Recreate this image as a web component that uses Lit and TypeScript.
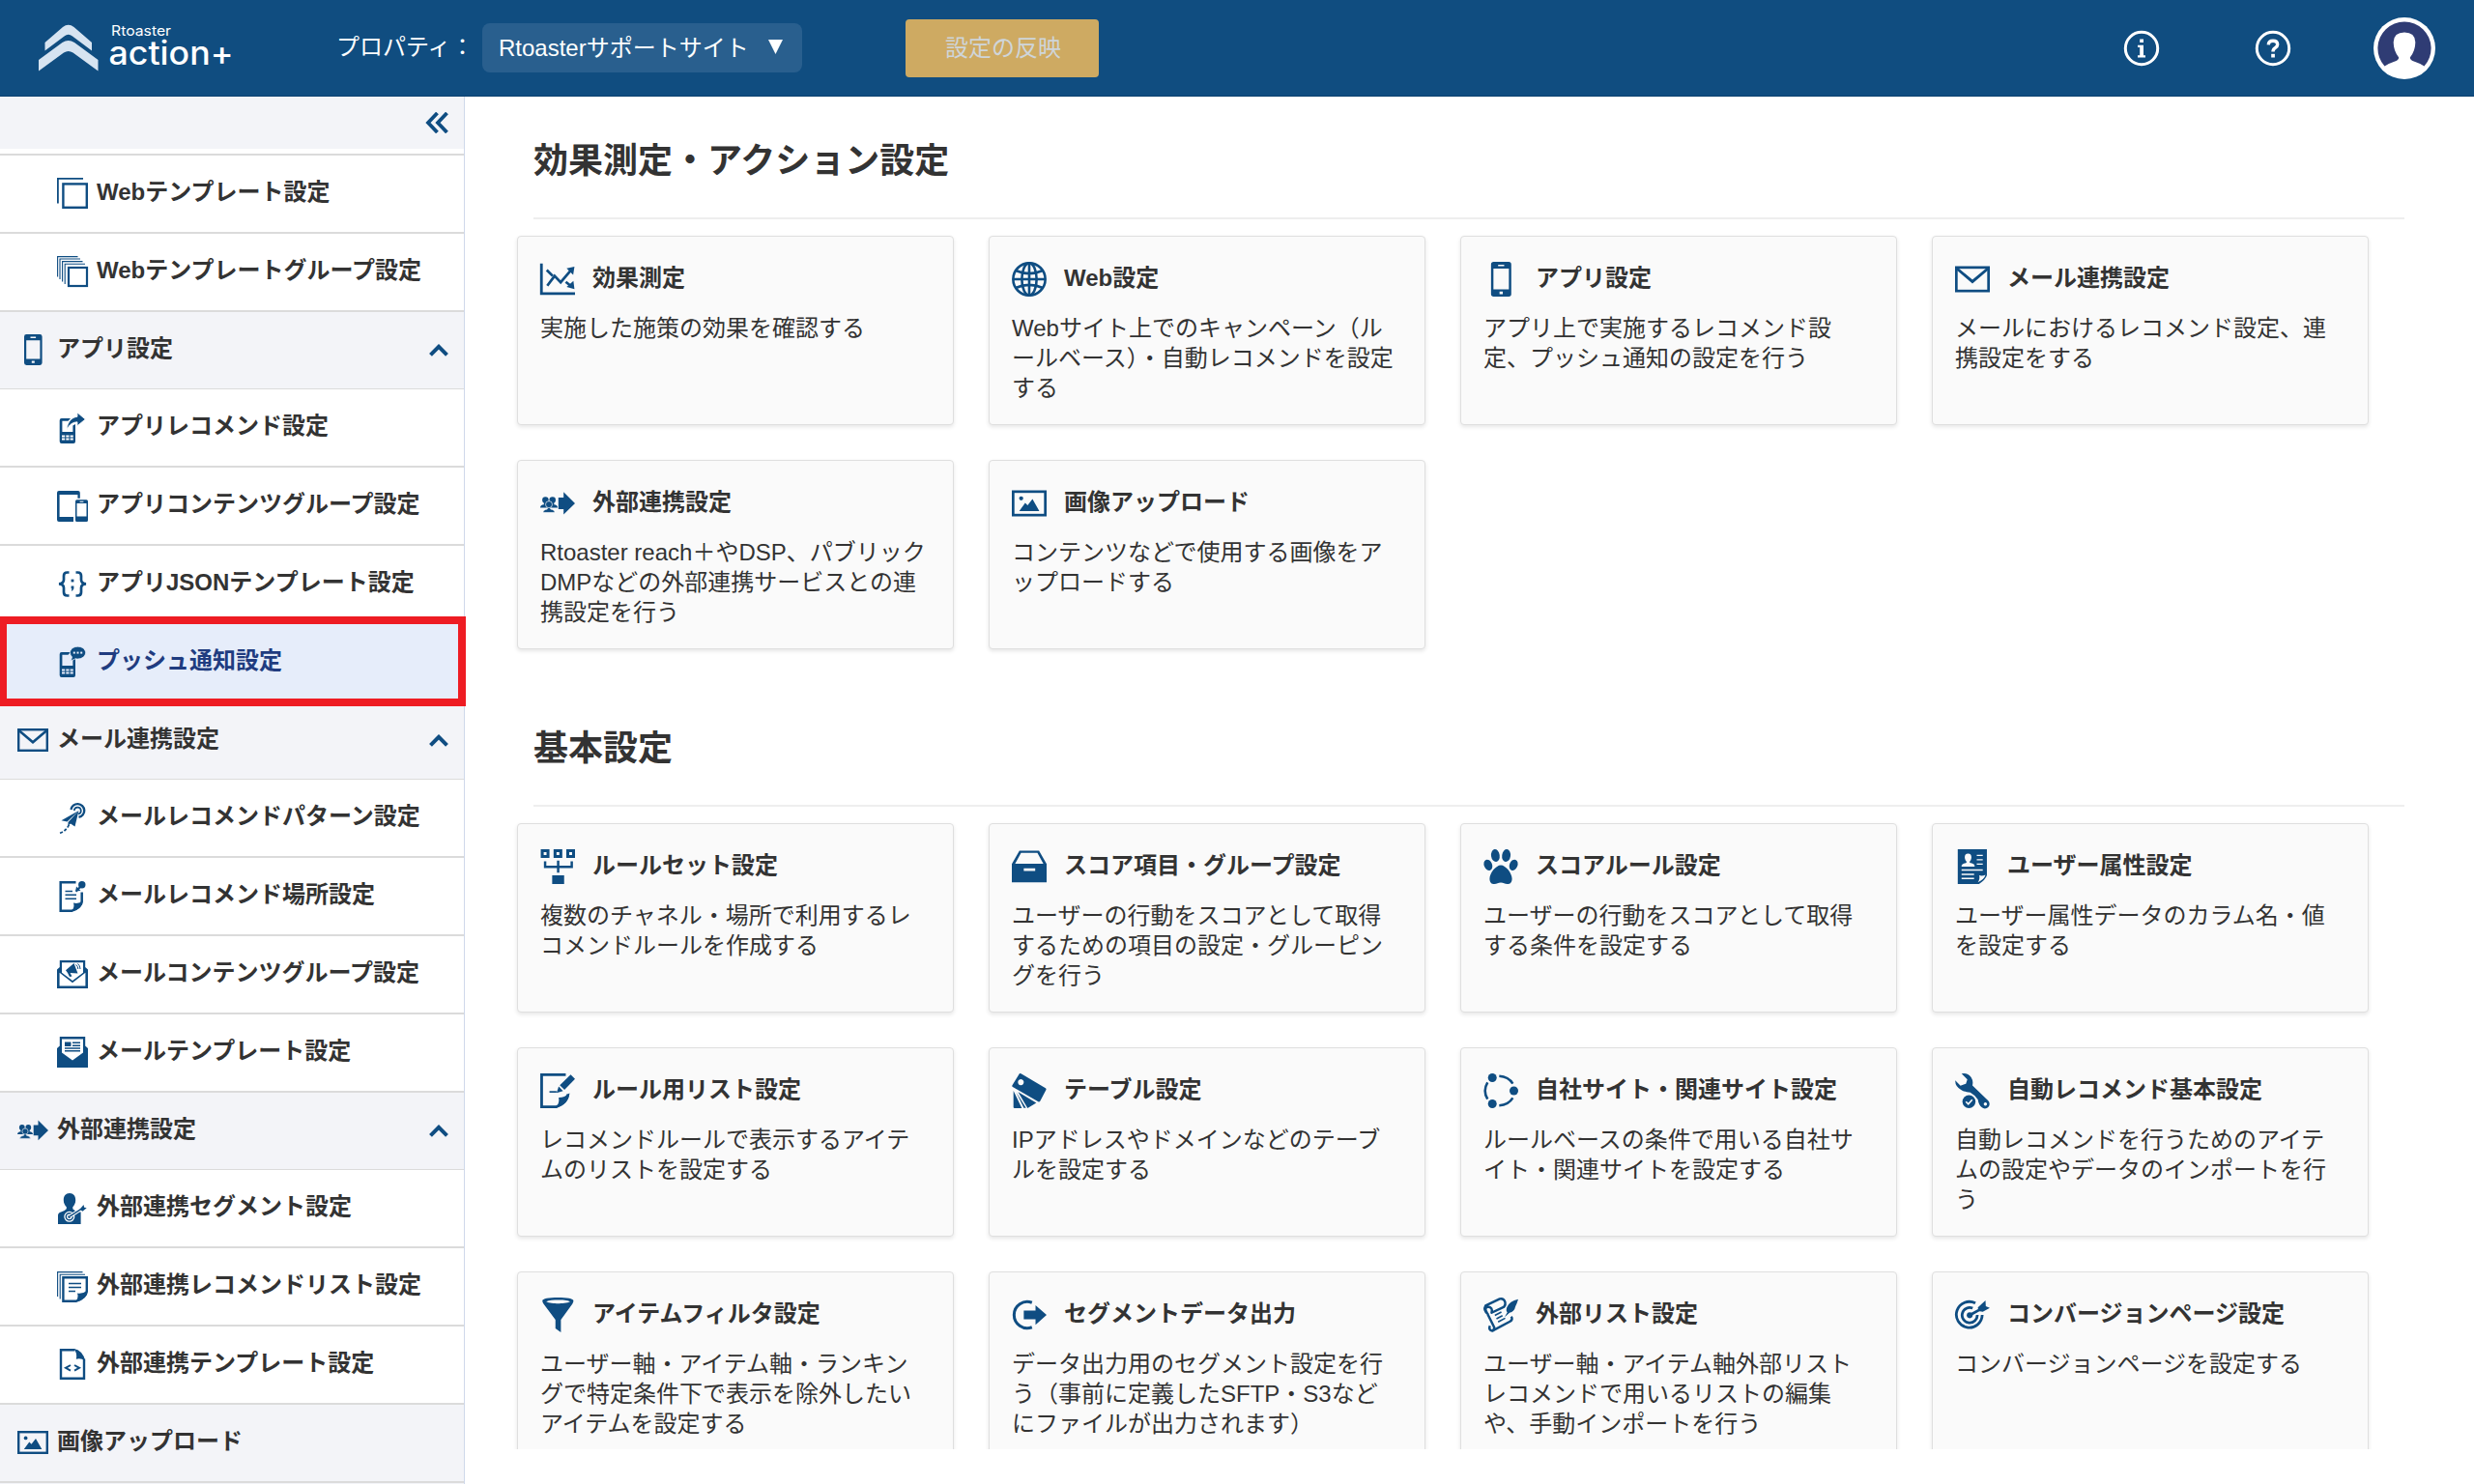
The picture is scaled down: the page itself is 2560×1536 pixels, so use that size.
import { LitElement, html, css, svg, TemplateResult, SVGTemplateResult } from "lit";
import { customElement, property } from "lit/decorators.js";
import { classMap } from "lit/directives/class-map.js";

/* Every icon is drawn on a 32 x 32 grid with currentColor; "var(--paper)" is the surface behind it. */
const handset = svg`
  <path fill-rule="evenodd" d="M4.7 6H14L11.5 8.7H5.4V20H16.4V13.5L19 12V30a2 2 0 0 1-2 2H4.7a2 2 0 0 1-2-2V8a2 2 0 0 1 2-2z
    M5 23.4h3.2v2H5z M9.3 23.4h3.2v2H9.3z M13.6 23.4h3.2v2h-3.2z M5 26.6h3.2v2H5z M9.3 26.6h3.2v2H9.3z M13.6 26.6h3.2v2h-3.2z"/>`;

const ICONS: Record<string, SVGTemplateResult> = {
  layers: svg`
    <path fill="none" stroke="currentColor" stroke-width="1.8" d="M.9 26.5V.9H27"/>
    <rect x="6.4" y="6.4" width="24.4" height="24.4" fill="none" stroke="currentColor" stroke-width="2.4"/>`,
  stack: svg`
    <g fill="none" stroke="currentColor" stroke-width="1.1">
      <path d="M.6 21.5V.6H21.5"/><path d="M3 24V3H24"/><path d="M5.6 26.5V5.6H26.5"/><path d="M8.2 29V8.2H29"/>
    </g>
    <rect x="12" y="12" width="19" height="19" fill="none" stroke="currentColor" stroke-width="2.2"/>`,
  phone: svg`
    <path fill-rule="evenodd" d="M9.4 0h13.8a2.4 2.4 0 0 1 2.4 2.4v27.2a2.4 2.4 0 0 1-2.4 2.4H9.4A2.4 2.4 0 0 1 7 29.600V2.400A2.400 2.400 0 0 1 9.400 0z
      M9.2 6.300V25.400H23.400V6.300z M13.500 2.600v1.500h5.600V2.600z M14.800 27.400v2.400h3v-2.400z"/>`,
  appRecommend: svg`${handset}
    <path d="M10 17.500C11 9.500 15 5 21 4.300V0L29.300 7L21 13.700V9.800C16 10 13 12.500 10 17.500z" stroke="var(--paper)" stroke-width=".8"/>`,
  devices: svg`
    <path fill-rule="evenodd" d="M2 0H21.800a2 2 0 0 1 2 2V7.800H21.400V4H2.600V27H17V32H2a2 2 0 0 1-2-2V2A2 2 0 0 1 2 0z"/>
    <path fill-rule="evenodd" d="M20.600 9.200H30.400a1.600 1.600 0 0 1 1.600 1.600V30.400a1.600 1.600 0 0 1-1.600 1.600H20.600a1.600 1.600 0 0 1-1.600-1.600V10.800a1.600 1.600 0 0 1 1.600-1.600z
      M20.500 13V26.600H30.500V13z M23.600 10.700v1.100h3.800v-1.100z"/>`,
  json: svg`
    <g fill="none" stroke="currentColor" stroke-width="2.700">
      <path d="M12.500 4.500H10.500Q7 4.500 7 8V12Q7 16 2 16.300Q7 16.600 7 20.500V25Q7 28.500 10.500 28.500H12.500"/>
      <path d="M19.500 4.500H21.500Q25 4.500 25 8V12Q25 16 30 16.300Q25 16.600 25 20.500V25Q25 28.500 21.500 28.500H19.500"/>
    </g>
    <rect x="14.600" y="11.600" width="2.800" height="2.800"/><path d="M14.600 18.600h2.800v2.600l-1.400 2.200h-1.200l.7-2.200h-.9z"/>`,
  push: svg`${handset}
    <path stroke="var(--paper)" stroke-width=".8" d="M21.500.2C26 .2 29.600 3 29.600 6.600S26 13 21.500 13Q20.300 13 19.200 12.700Q17 14.400 13.800 14.400Q15.300 13 15.500 11Q13.400 9.200 13.400 6.600C13.400 3 17 .2 21.500.2z"/>
    <g fill="var(--paper)"><rect x="16.800" y="5.600" width="2" height="2"/><rect x="20.500" y="5.600" width="2" height="2"/><rect x="24.200" y="5.600" width="2" height="2"/></g>`,
  mail: svg`
    <rect x="1.200" y="5.200" width="29.600" height="21.600" fill="none" stroke="currentColor" stroke-width="2.400"/>
    <path d="M1.500 6L16 18.200L30.500 6" fill="none" stroke="currentColor" stroke-width="2.600"/>`,
  plane: svg`
    <g fill="none" stroke="currentColor">
      <path d="M14.500 7A6.900 6.900 0 1 1 22.500 14.800" stroke-width="2.400"/>
      <path d="M17.800 8A3.500 3.500 0 1 1 22 11.500" stroke-width="1.700"/>
      <path d="M3 31.300Q9 29.500 12.500 22.500" stroke-width="1.700" stroke-dasharray="3.200 1.800"/>
    </g>
    <path d="M22.500 8L4.500 18.300L10.500 19.500z"/><path d="M22.500 8L11.500 20V23.500L14 21.500L18.500 24.500z"/>`,
  notePin: svg`
    <path d="M19.500 1.300H3.700V30.700H15.500Q25.500 27 25.700 21V11.500" fill="none" stroke="currentColor" stroke-width="2.500"/>
    <path d="M15 31.500Q18.500 27 17 22.500Q22 24 26.800 20.500Q26 29 15 31.500z"/>
    <path d="M8.500 10.500H16M8.500 14.300H20M8.500 18.200H20" stroke="currentColor" stroke-width="1.500"/>
    <circle cx="25.800" cy="3.800" r="3.700"/><path d="M24 6L19.500 10.800" stroke="currentColor" stroke-width="2.200"/>
    <path d="M20 5.500L24.500 10L20.500 10.200L19.400 9z"/>`,
  mailMega: svg`
    <path d="M0 11.500L2.800 9V2H29.200V9L32 11.500V31H0z M2.600 14.800V28.500H29.400V14.800L16 25.300z M5 4.200V14.700L16 23L27 14.700V4.200z" fill-rule="evenodd"/>
    <path d="M9 12.300L17.500 5L21.500 15.500L13.500 15L15.500 18.500L13 19L11 15z"/>
    <path d="M19.500 6.500Q21.700 8 21.800 11M21.500 5.500Q24 7.500 24 11" fill="none" stroke="currentColor" stroke-width="1"/>`,
  mailLetter: svg`
    <path d="M2.800 0H29.200V9.500L32 12V32H0V12L2.800 9.500z"/>
    <path d="M5 2.500H27V16.500L16 24.500L5 16.500z" fill="var(--paper)"/>
    <rect x="8" y="5.500" width="6.500" height="4.500"/>
    <path d="M16 6.200H24M16 9.200H24M8 12H24M8 14.700H24" stroke="currentColor" stroke-width="1.500"/>`,
  external: svg`
    <path d="M16.700 10.600H21.500V5.600L32 15.900L21.500 26.200V21.300H16.700z"/>
    <circle cx="4.800" cy="12.900" r="2.900"/><circle cx="11.300" cy="12.900" r="2.900"/>
    <path d="M0 20Q0 17.600 3.400 17.200V14.500H6.400V20z M9.700 14.500H12.700V17.200Q16 17.600 16 20H9.700z"/>
    <g stroke="var(--paper)" stroke-width=".6"><path d="M2.600 24.400Q2.600 21.800 6.500 21.300V18H9.500V21.300Q13.400 21.800 13.400 24.400z"/><circle cx="8" cy="17" r="3.100"/></g>`,
  segment: svg`
    <path d="M13 0C17 0 19.200 3 19.200 7.200C19.200 10.300 17.800 12.500 16.300 14.200V16.300Q18 18.600 24.600 19.500V32H1V23Q1 20.500 4 19.500Q8.500 18.200 9.800 16.300V14.200C8.200 12.500 6.800 10.300 6.800 7.200C6.800 3 9 0 13 0z"/>
    <g fill="none" stroke="var(--paper)"><circle cx="12.800" cy="24.300" r="4.900" stroke-width="1.300"/><circle cx="12.800" cy="24.300" r="2.200" stroke-width="1.200"/>
      <path d="M13 24.200L25.500 16" stroke-width="3.600"/></g>
    <path d="M13 24.200L25 16.300" stroke="currentColor" stroke-width="1.400"/>
    <path d="M23.500 16.800L27.500 12L28.200 14.700L30.700 15.300L26.500 18.800z"/>`,
  noteStack: svg`
    <g fill="none" stroke="currentColor" stroke-width="1.100"><path d="M.6 26V.6H26.500"/><path d="M3.200 28.500V3.200H29"/></g>
    <path d="M6.400 6.200H30.800V20.500Q30 27.500 19.500 30.800H6.400z" fill="none" stroke="currentColor" stroke-width="2.400"/>
    <path d="M19.500 31.500Q22.500 26.500 21 22.500Q26.500 23.500 31.800 19.500Q31.500 28.500 19.500 31.500z"/>
    <path d="M12 12.600H25M12 16.500H25M12 20.500H19" stroke="currentColor" stroke-width="1.500"/>`,
  code: svg`
    <path d="M18.500 1.200H4V30.800H28V10.500" fill="none" stroke="currentColor" stroke-width="2.400"/>
    <path d="M17.500 0Q26.500 1.500 29.200 12.500Q24 9 19.800 10.800Q21.200 4.500 17.500 0z"/>
    <path d="M14 17L9 19.800L14 22.600M18 17L23 19.800L18 22.600" fill="none" stroke="currentColor" stroke-width="2"/>`,
  image: svg`
    <rect x="1.200" y="5.200" width="29.600" height="21.600" fill="none" stroke="currentColor" stroke-width="2.400"/>
    <circle cx="8.600" cy="11.400" r="1.900"/><path d="M6.800 23L12.300 15.500L14.500 17.800L19 12L25.300 23z"/>`,
  chart: svg`
    <path d="M1.100 1.500V29.300H32" fill="none" stroke="currentColor" stroke-width="2.500"/>
    <path d="M6.500 22L13.200 13L18.800 18.800L28.500 7.500" fill="none" stroke="currentColor" stroke-width="2.400"/>
    <path d="M6 7.500L11.500 13M23.500 18.500L28.500 22.500" fill="none" stroke="currentColor" stroke-width="2.400"/>
    <path d="M31.500 4.500L30.300 12L24.300 6z"/><path d="M31.500 25.200L24.300 23L30.500 17.500z"/>`,
  globe: svg`
    <g fill="none" stroke="currentColor" stroke-width="2.300"><circle cx="16" cy="16" r="14.800"/><ellipse cx="16" cy="16" rx="6.800" ry="14.800"/>
      <path d="M16 1V31M1 16H31M3.500 8Q16 13.500 28.500 8M3.500 24Q16 18.500 28.500 24"/></g>`,
  ruleset: svg`
    <path fill-rule="evenodd" d="M.5 0h8v8h-8z M3.200 2.700v2.600h2.600V2.700z M12.300 0h8v8h-8z M15 2.700v2.600h2.600V2.700z M24 0h8v8h-8z M26.700 2.700v2.600h2.600V2.700z M11 24h11v8H11z"/>
    <path d="M4.500 11V16.200H29V11M16.500 10.500V21.500" fill="none" stroke="currentColor" stroke-width="2.200"/>`,
  drawer: svg`
    <path fill-rule="evenodd" d="M7 1.300H25L32 13.500V30.500H0V13.500z M8.500 3.300L3 13.300H29L23.500 3.300z M11 17.600V20H21.500V17.600z"/>`,
  paw: svg`
    <ellipse cx="11" cy="5.800" rx="3.900" ry="5.800" transform="rotate(-8 11 5.800)"/><ellipse cx="21" cy="5.800" rx="3.900" ry="5.800" transform="rotate(8 21 5.800)"/>
    <ellipse cx="4.300" cy="14.500" rx="3.700" ry="5.200" transform="rotate(-22 4.300 14.500)"/><ellipse cx="27.700" cy="14.500" rx="3.700" ry="5.200" transform="rotate(22 27.700 14.500)"/>
    <path d="M16 14.600C20.500 14.600 26.300 22 26.300 27C26.300 30.500 24.500 32 22 32C19.500 32 18.500 30.700 16 30.700S12.500 32 10 32C7.500 32 5.700 30.500 5.700 27C5.700 22 11.500 14.600 16 14.600z"/>`,
  profile: svg`
    <path d="M2.500 0H29.300V24Q28 28 22 32H2.500z"/>
    <g fill="var(--paper)"><path d="M12 4C14.500 4 15.300 6 15 8.300Q14.700 10.300 13.500 11.300V12.500Q18 13.500 18 15V16H6V15Q6 13.500 10.500 12.500V11.300Q9.300 10.300 9 8.300C8.700 6 9.500 4 12 4z"/>
      <path d="M20 5h5.500v1.300H20z M20 9h5.500v1.300H20z M20 13h5.500v1.300H20z M6 18.500h19.500v1.300H6z M6 22.500h11.500v1.300H6z M6 26.300h11.500v1.300H6z"/>
      <path d="M21 30.500Q23.200 27 22.200 24Q25 25 28 23.500Q27 27.500 21 30.500z"/></g>`,
  noteEdit: svg`
    <path d="M23.500 1.300H1.300V30.700H15Q24.500 27 25.700 19" fill="none" stroke="currentColor" stroke-width="2.500"/>
    <path d="M14.500 31.800Q18 27 17 22.300Q22 22.500 27 18Q26 29 14.500 31.800z"/>
    <path d="M28 1L32 5L22.300 15L18 10.800z"/><path d="M17 12L21 16.200L15 18z"/><path d="M8.500 17H15" stroke="currentColor" stroke-width="1.500"/>`,
  tag: svg`
    <path fill-rule="evenodd" d="M7 .2Q7.500-.2 8.500.3L31 13.500Q32 14.200 31.500 15L26 25.500Q25.300 26.500 24.300 26L.8 12.500Q0 12 .3 11z M8.300 5.400a2.700 2.700 0 1 0 .01 0z"/>
    <path d="M1.500 16V31Q1.500 32 2.500 32H9.200z"/><path d="M4 17.300L11 31.800L13 31.800z"/><path d="M5.800 17L22.500 27.200L14.500 32z"/>`,
  ring: svg`
    <circle cx="8.200" cy="4" r="4"/><circle cx="28" cy="16" r="4"/><circle cx="8.200" cy="28" r="4"/>
    <g fill="none" stroke="currentColor" stroke-width="2.300">
      <path d="M3.800 8.300Q-.8 16 3.800 23.700"/><path d="M14.500 2.500Q23 3 27 9.500"/><path d="M14.500 29.500Q23 29 27 22.500"/></g>`,
  wrench: svg`
    <path fill-rule="evenodd" d="M6 .3Q11.500-.8 14.800 3.500Q17 7 16 11L30.500 25.200A4 4 0 0 1 24.500 31.200Q21.800 29 21 24Q18.500 20 14 17.500Q8.500 17 5.500 15Q0 12 .2 6.500L5 11.300L10 9.500L11.300 5.500z M27.900 26.700a1.500 1.500 0 1 0 .01 0z"/>
    <circle cx="12.800" cy="26" r="6.800" fill="var(--paper)"/><circle cx="12.800" cy="26" r="6"/>
    <path d="M10 26L12.200 28.200L15.800 24.200" fill="none" stroke="var(--paper)" stroke-width="1.500"/>`,
  funnel: svg`
    <path fill-rule="evenodd" d="M2 3C2 1 8 0 16.300 0S30.600 1 30.600 3Q30.500 4.300 29.500 6L19 20.500V32L14 28.500V20.500L3.200 6Q2 4.300 2 3z M5.500 3.800C8 5.300 13 5.500 16.300 5.500S25 5.300 27.500 3.800C25 2.400 20 2.200 16.300 2.200S8 2.400 5.500 3.800z"/>`,
  output: svg`
    <path d="M18.500 4.700A12.100 12.100 0 1 0 18.500 27.300" fill="none" stroke="currentColor" stroke-width="2.700"/>
    <path d="M11 12H21.800V7L32 16L21.800 25V20H11z"/>`,
  scroll: svg`
    <g fill="none" stroke="currentColor" stroke-width="2.200" stroke-linejoin="round">
      <path d="M4.500 15.500Q-.5 12 2 7.500L15 1.200Q19 .5 20 4.500Q20.500 6.500 19 8.500L7.500 14Q9 9 4 8.500Q1.500 9 2 11.500L10 27.500Q9.500 31 7.500 30.500Q4.500 29.500 6 26"/>
      <path d="M8 30.800L24.500 22Q27.500 20 25.500 17.500"/></g>
    <path d="M32 1.500Q24 3 21.500 9Q20.500 12.500 22 13.500L19.500 18L24 14Q28.500 13 29.500 8Q31 5 32 1.500z"/>
    <path d="M10.500 16.500L16.500 13.300M12 19.500L17.500 16.700M13.500 22.500L20 19" stroke="currentColor" stroke-width="1.400"/>`,
  target: svg`
    <g fill="none" stroke="currentColor" stroke-width="2.500">
      <path d="M18.700 5.200A11.900 11.900 0 1 0 25 16"/><path d="M16.200 9.800A7 7 0 1 0 20.500 16"/>
      <path d="M13.500 16.300L23 11"/></g>
    <circle cx="13.500" cy="16.300" r="2.700"/><path d="M21 9L28 2.700L28.300 8L32 9.600L25.500 13.200L21.500 12.500z"/>`,
};

@customElement("ui-icon")
export class UiIcon extends LitElement {
  static styles = css`
    :host { display: block; flex: none; }
    .glyph { display: block; width: 100%; height: 100%; fill: currentColor; overflow: visible; }
  `;
  @property() name = "";
  render() {
    return html`<svg class="glyph" viewBox="0 0 32 32">${ICONS[this.name]}</svg>`;
  }
}

interface NavRow { label: string; icon: string; kind: "section" | "item"; open?: boolean; active?: boolean; }
interface Card { title: string; icon: string; lines: string[]; }

const NAV: NavRow[] = [
  { label: "Webテンプレート設定", icon: "layers", kind: "item" },
  { label: "Webテンプレートグループ設定", icon: "stack", kind: "item" },
  { label: "アプリ設定", icon: "phone", kind: "section", open: true },
  { label: "アプリレコメンド設定", icon: "appRecommend", kind: "item" },
  { label: "アプリコンテンツグループ設定", icon: "devices", kind: "item" },
  { label: "アプリJSONテンプレート設定", icon: "json", kind: "item" },
  { label: "プッシュ通知設定", icon: "push", kind: "item", active: true },
  { label: "メール連携設定", icon: "mail", kind: "section", open: true },
  { label: "メールレコメンドパターン設定", icon: "plane", kind: "item" },
  { label: "メールレコメンド場所設定", icon: "notePin", kind: "item" },
  { label: "メールコンテンツグループ設定", icon: "mailMega", kind: "item" },
  { label: "メールテンプレート設定", icon: "mailLetter", kind: "item" },
  { label: "外部連携設定", icon: "external", kind: "section", open: true },
  { label: "外部連携セグメント設定", icon: "segment", kind: "item" },
  { label: "外部連携レコメンドリスト設定", icon: "noteStack", kind: "item" },
  { label: "外部連携テンプレート設定", icon: "code", kind: "item" },
  { label: "画像アップロード", icon: "image", kind: "section" },
];

const SECTIONS: { heading: string; cards: Card[] }[] = [
  {
    heading: "効果測定・アクション設定",
    cards: [
      { title: "効果測定", icon: "chart", lines: ["実施した施策の効果を確認する"] },
      { title: "Web設定", icon: "globe", lines: ["Webサイト上でのキャンペーン（ル", "ールベース）・自動レコメンドを設定", "する"] },
      { title: "アプリ設定", icon: "phone", lines: ["アプリ上で実施するレコメンド設", "定、プッシュ通知の設定を行う"] },
      { title: "メール連携設定", icon: "mail", lines: ["メールにおけるレコメンド設定、連", "携設定をする"] },
      { title: "外部連携設定", icon: "external", lines: ["Rtoaster reach＋やDSP、パブリック", "DMPなどの外部連携サービスとの連", "携設定を行う"] },
      { title: "画像アップロード", icon: "image", lines: ["コンテンツなどで使用する画像をア", "ップロードする"] },
    ],
  },
  {
    heading: "基本設定",
    cards: [
      { title: "ルールセット設定", icon: "ruleset", lines: ["複数のチャネル・場所で利用するレ", "コメンドルールを作成する"] },
      { title: "スコア項目・グループ設定", icon: "drawer", lines: ["ユーザーの行動をスコアとして取得", "するための項目の設定・グルーピン", "グを行う"] },
      { title: "スコアルール設定", icon: "paw", lines: ["ユーザーの行動をスコアとして取得", "する条件を設定する"] },
      { title: "ユーザー属性設定", icon: "profile", lines: ["ユーザー属性データのカラム名・値", "を設定する"] },
      { title: "ルール用リスト設定", icon: "noteEdit", lines: ["レコメンドルールで表示するアイテ", "ムのリストを設定する"] },
      { title: "テーブル設定", icon: "tag", lines: ["IPアドレスやドメインなどのテーブ", "ルを設定する"] },
      { title: "自社サイト・関連サイト設定", icon: "ring", lines: ["ルールベースの条件で用いる自社サ", "イト・関連サイトを設定する"] },
      { title: "自動レコメンド基本設定", icon: "wrench", lines: ["自動レコメンドを行うためのアイテ", "ムの設定やデータのインポートを行", "う"] },
      { title: "アイテムフィルタ設定", icon: "funnel", lines: ["ユーザー軸・アイテム軸・ランキン", "グで特定条件下で表示を除外したい", "アイテムを設定する"] },
      { title: "セグメントデータ出力", icon: "output", lines: ["データ出力用のセグメント設定を行", "う（事前に定義したSFTP・S3など", "にファイルが出力されます）"] },
      { title: "外部リスト設定", icon: "scroll", lines: ["ユーザー軸・アイテム軸外部リスト", "レコメンドで用いるリストの編集", "や、手動インポートを行う"] },
      { title: "コンバージョンページ設定", icon: "target", lines: ["コンバージョンページを設定する"] },
    ],
  },
];

@customElement("app-root")
export class AppRoot extends LitElement {
  static styles = css`
    :host {
      display: flex; flex-direction: column; height: 1536px; width: 2560px; overflow: hidden; background: #fff;
      font-family: "Liberation Sans", "Noto Sans CJK JP", sans-serif; font-size: 24px; color: #333;
      --brand: #0f4d82; --paper: #fff;
    }
    .header {
      flex: none; height: 100px; box-sizing: border-box; display: flex; align-items: center;
      background: #104d80; border-bottom: 1px solid #0c4170; color: #fff; padding: 0 40px;
    }
    .logo { display: block; width: 204px; height: 60px; flex: none; }
    .prop { margin-left: 104px; width: 151px; white-space: nowrap; line-height: 36px; padding-bottom: 1px; }
    .select {
      width: 331px; height: 51px; box-sizing: border-box; padding: 0 20px 0 17px; border-radius: 8px; background: #295f8e;
      display: flex; align-items: center; justify-content: space-between; white-space: nowrap;
    }
    .select-text { padding-bottom: 4px; }
    .caret { width: 15px; height: 15px; fill: #fff; display: block; margin-bottom: 2px; }
    .apply {
      margin-left: 107px; width: 200px; height: 60px; box-sizing: border-box; padding: 0 0 4px 2px; border-radius: 4px;
      background: #ceaa62; color: #cfd5d9; display: flex; align-items: center; justify-content: center;
    }
    .tools { margin-left: auto; display: flex; align-items: center; }
    .tool { width: 38px; height: 38px; display: block; margin-right: 98px; }
    .avatar { width: 66px; height: 66px; display: block; margin: 0 -1px 0 -14px; }
    .body { flex: 1; min-height: 0; display: flex; }
    .side { width: 480px; flex: none; border-right: 1px solid #cfd8ea; background: #f3f4f8; }
    .collapse {
      height: 54px; box-sizing: border-box; background: #f3f4f8; display: flex; justify-content: flex-end; align-items: center; padding-right: 16px;
    }
    .collapse-glyph { width: 24px; height: 22px; display: block; }
    .nav { background: #fff; padding-top: 5px; }
    .row {
      height: 80.8px; box-sizing: border-box; border-bottom: 2px solid #dbdbdb; display: flex; align-items: center;
      gap: 9px; padding: 0 16px 0 59px; background: #fff; --paper: #fff; font-weight: 700; white-space: nowrap; position: relative;
    }
    .first-line { height: 2px; background: #dbdbdb; }
    .row.section { background: #f3f4f8; --paper: #f3f4f8; padding-left: 18px; }
    .row.open { border-bottom-width: 1px; }
    .row.active { background: #e6edfa; --paper: #e6edfa; color: #203c80; }
    .row-icon { width: 32px; height: 32px; color: var(--brand); }
    .label { flex: 1; line-height: 36px; padding-bottom: 3px; }
    .chev { width: 20px; height: 13px; display: block; fill: none; stroke: var(--brand); stroke-width: 4; }
    .callout { position: absolute; left: -1px; top: -8px; width: 483px; height: 93px; box-sizing: border-box; border: 8px solid #ee1c23; z-index: 2; }
    .main { flex: 1; height: 1400px; overflow: hidden; padding: 0 0 0 54px; box-sizing: border-box; }
    .group { height: 608px; }
    .heading {
      margin: 0 0 0 17px; width: 1936px; height: 127px; box-sizing: border-box; padding-top: 41px; border-bottom: 2px solid #eee;
      font-size: 36px; line-height: 52px; font-weight: 700;
    }
    .grid { margin-top: 17px; display: grid; grid-template-columns: repeat(4, 452px); grid-auto-rows: 196px; gap: 36px; }
    .card {
      box-sizing: border-box; border: 1px solid #dfdfdf; border-radius: 4px; background: #fafafa; --paper: #fafafa;
      box-shadow: 0 2px 4px rgba(0, 0, 0, .1); padding: 26px 0 0 23px;
    }
    .card-head { display: flex; align-items: center; gap: 18px; height: 36px; }
    .card-icon { width: 36px; height: 36px; color: var(--brand); }
    .card-title { font-weight: 700; line-height: 36px; padding-bottom: 2px; white-space: nowrap; }
    .card-text { margin-top: 18px; line-height: 30.8px; white-space: nowrap; }
    .line { height: 30.8px; }
  `;

  private header(): TemplateResult {
    return html`
      <div class="header">
        <svg class="logo" viewBox="0 0 204 60">
          <g fill="#d7e4f1">
            <path d="M6.500 24L25 8Q30.700 3.400 36.500 8L55 24V32.500L35 17.500Q30.700 14 26.500 17.500L6.500 32.500z"/>
            <path d="M0 42L24.500 24Q30.700 20 37 24L61.500 42V53.500L35.500 34.500Q30.700 31.300 26 34.500L0 53.500z"/>
          </g>
          <g fill="#fff" font-family="Inter, sans-serif">
            <text x="75" y="16.500" font-size="14.500" textLength="62" lengthAdjust="spacingAndGlyphs">Rtoaster</text>
            <text x="72.500" y="46.500" font-size="34" font-weight="500" textLength="129" lengthAdjust="spacingAndGlyphs">action+</text>
          </g>
        </svg>
        <div class="prop">プロパティ：</div>
        <div class="select"><span class="select-text">Rtoasterサポートサイト</span><svg class="caret" viewBox="0 0 15 15"><path d="M0 0H15L7.500 15z"/></svg></div>
        <div class="apply">設定の反映</div>
        <div class="tools">
          <svg class="tool" viewBox="0 0 38 38"><circle cx="19" cy="19" r="16.700" fill="none" stroke="#fff" stroke-width="3"/>
            <path fill="#fff" d="M17.200 9.500h3.800v3.600h-3.800z M15 15.800h6v10.500h2V28.500h-8v-2.200h2.200V18H15z"/></svg>
          <svg class="tool" viewBox="0 0 38 38"><circle cx="19" cy="19" r="16.700" fill="none" stroke="#fff" stroke-width="3"/>
            <path fill="none" stroke="#fff" stroke-width="3.400" d="M14.300 15.300Q14.500 11.300 19 11.300T23.700 15Q23.700 17 21.200 18.600Q19 20 19 22.600"/><rect x="17.200" y="24.800" width="3.700" height="3.700" fill="#fff"/></svg>
          <svg class="avatar" viewBox="0 0 66 66">
            <circle cx="33" cy="33" r="32" fill="#fff"/>
            <path fill="#2f3c74" d="M12.500 51.500A27.600 27.600 0 1 1 53.500 51.500Q50 49 43.500 46.800Q38.800 45.300 38.800 42.500Q44.500 35.500 44.300 26.500Q44 16.500 33 16.500T21.700 26.500Q21.500 35.500 27.200 42.500Q27.200 45.300 22.500 46.800Q16 49 12.500 51.500z"/>
          </svg>
        </div>
      </div>`;
  }

  private row(r: NavRow): TemplateResult {
    const cls = { row: true, section: r.kind === "section", open: !!r.open, active: !!r.active };
    return html`
      <div class=${classMap(cls)}>
        <ui-icon class="row-icon" name=${r.icon}></ui-icon>
        <span class="label">${r.label}</span>
        ${r.open ? html`<svg class="chev" viewBox="0 0 20 13"><path d="M1.500 11.300L10 2.800L18.500 11.300"/></svg>` : null}
        ${r.active ? html`<div class="callout"></div>` : null}
      </div>`;
  }

  private card(c: Card): TemplateResult {
    return html`
      <div class="card">
        <div class="card-head"><ui-icon class="card-icon" name=${c.icon}></ui-icon><span class="card-title">${c.title}</span></div>
        <div class="card-text">${c.lines.map((l) => html`<div class="line">${l}</div>`)}</div>
      </div>`;
  }

  render() {
    return html`
      ${this.header()}
      <div class="body">
        <div class="side">
          <div class="collapse">
            <svg class="collapse-glyph" viewBox="0 0 24 22"><path d="M12.500 1L3 11L12.500 21M22.500 1L13 11L22.500 21" fill="none" stroke="#0f4d82" stroke-width="3.800"/></svg>
          </div>
          <div class="nav">
            <div class="first-line"></div>
            ${NAV.map((r) => this.row(r))}
          </div>
        </div>
        <div class="main">
          ${SECTIONS.map((s) => html`
            <div class="group">
              <div class="heading">${s.heading}</div>
              <div class="grid">${s.cards.map((c) => this.card(c))}</div>
            </div>`)}
        </div>
      </div>`;
  }
}
